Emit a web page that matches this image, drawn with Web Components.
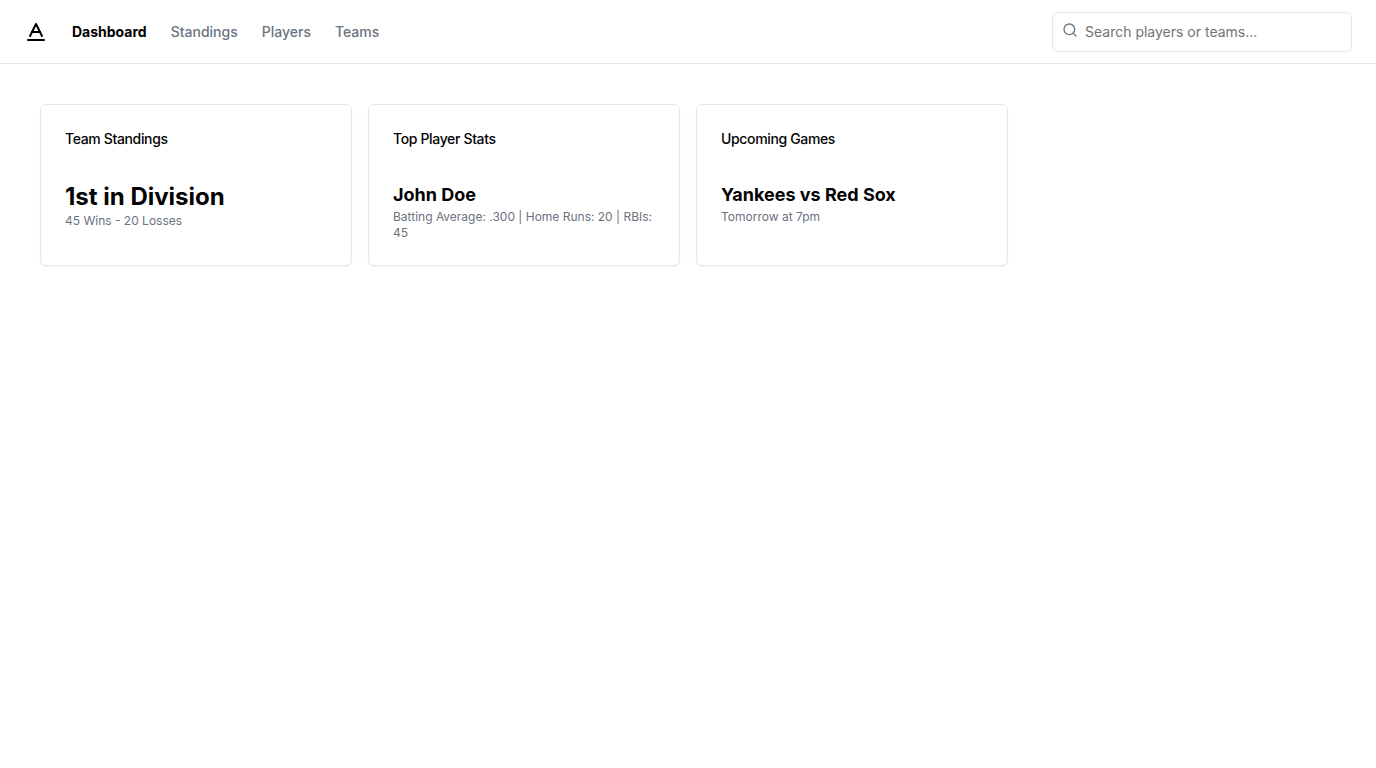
<!DOCTYPE html>
<html lang="en">
<head>
<meta charset="utf-8">
<meta name="viewport" content="width=device-width, initial-scale=1">
<title>Dashboard</title>
<style>
  body {
    --muted: #6b7280;
    --border: #e5e7eb;
    margin: 0; background: #fff; color: #030303; font: 16px/24px Inter, sans-serif;
  }
</style>
</head>
<body>
<baseball-app></baseball-app>
<script>
const define = (name, html) => {
  const template = document.createElement('template');
  template.innerHTML = html;
  customElements.define(name, class extends HTMLElement {
    constructor() {
      super();
      this.attachShadow({ mode: 'open' }).append(template.content.cloneNode(true));
    }
  });
};

define('brand-logo', `
  <style>
    :host { display: block; }
    a { display: block; color: #000; }
    svg { display: block; }
  </style>
  <a href="#" aria-label="Home">
    <svg width="24" height="24" viewBox="0 0 24 24" fill="none" stroke="currentColor" stroke-width="2" stroke-linecap="round" stroke-linejoin="round">
      <path d="M4 20h16"/><path d="m6 16 6-12 6 12"/><path d="M8 12h8"/>
    </svg>
  </a>`);

customElements.define('nav-link', class extends HTMLElement {
  connectedCallback() {
    const root = this.attachShadow({ mode: 'open' });
    root.innerHTML = `
      <style>
        :host { display: block; font-size: 14px; line-height: 20px; font-weight: 500; color: var(--muted); }
        :host([current]) { font-weight: 700; color: #000; }
        a { color: inherit; text-decoration: none; }
      </style>
      <a href="#"><slot></slot></a>`;
    if (this.hasAttribute('current')) root.querySelector('a').setAttribute('aria-current', 'page');
  }
});

define('search-box', `
  <style>
    :host { display: block; flex: 0 1 300px; }
    form { position: relative; }
    svg { position: absolute; left: 10px; top: 10px; color: var(--muted); }
    input {
      display: block; box-sizing: border-box; width: 100%; height: 40px;
      padding: 8px 12px 8px 32px; border: 1px solid var(--border); border-radius: 6px;
      background: #fff; color: inherit; font: 14px/20px Inter, sans-serif;
    }
    input::placeholder { color: #737373; opacity: 1; }
  </style>
  <form role="search">
    <svg width="16" height="16" viewBox="0 0 24 24" fill="none" stroke="currentColor" stroke-width="2" stroke-linecap="round" stroke-linejoin="round" aria-hidden="true">
      <circle cx="11" cy="11" r="8"/><path d="m21 21-4.3-4.3"/>
    </svg>
    <input type="search" aria-label="Search players or teams" placeholder="Search players or teams...">
  </form>`);

define('app-header', `
  <style>
    header {
      display: flex; align-items: center; justify-content: space-between; gap: 24px;
      box-sizing: border-box; height: 64px; padding: 0 24px; border-bottom: 1px solid var(--border);
    }
    :host { display: block; }
    nav { display: flex; align-items: center; gap: 24px; }
  </style>
  <header>
    <nav>
      <brand-logo></brand-logo>
      <nav-link current>Dashboard</nav-link>
      <nav-link>Standings</nav-link>
      <nav-link>Players</nav-link>
      <nav-link>Teams</nav-link>
    </nav>
    <search-box></search-box>
  </header>`);

define('stat-card', `
  <style>
    :host {
      display: block; box-sizing: border-box; padding: 24px;
      border: 1px solid var(--border); border-radius: 6px; background: #fff;
      box-shadow: 0 1px 2px rgb(0 0 0 / 5%);
    }
    h3 { margin: 0 0 32px; font-size: 14px; line-height: 20px; font-weight: 500; letter-spacing: -0.025em; }
    .value { font-size: 18px; line-height: 28px; font-weight: 700; }
    :host([large]) .value { font-size: 24px; line-height: 32px; }
    p { margin: 0; font-size: 12px; line-height: 16px; color: var(--muted); }
  </style>
  <h3><slot name="title"></slot></h3>
  <div class="value"><slot name="value"></slot></div>
  <p><slot></slot></p>`);

define('baseball-app', `
  <style>
    :host { display: block; }
    main {
      display: grid; grid-template-columns: repeat(4, minmax(0, 1fr)); gap: 16px; padding: 40px;
    }
    @media (max-width: 1023px) { main { grid-template-columns: repeat(2, minmax(0, 1fr)); } }
  </style>
  <app-header></app-header>
  <main>
    <stat-card large>
      <span slot="title">Team Standings</span>
      <span slot="value">1st in Division</span>
      45 Wins - 20 Losses
    </stat-card>
    <stat-card>
      <span slot="title">Top Player Stats</span>
      <span slot="value">John Doe</span>
      Batting Average: .300 | Home Runs: 20 | RBIs: 45
    </stat-card>
    <stat-card>
      <span slot="title">Upcoming Games</span>
      <span slot="value">Yankees vs Red Sox</span>
      Tomorrow at 7pm
    </stat-card>
  </main>`);
</script>
</body>
</html>
